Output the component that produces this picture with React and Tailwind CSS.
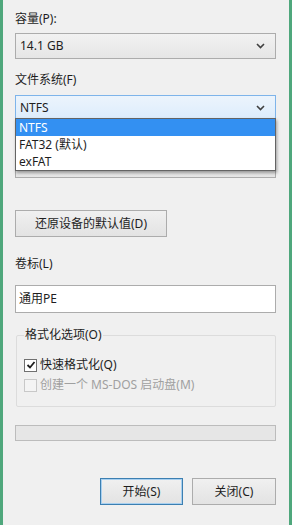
import React from "react";

const font = "font-['Segoe_UI','Noto_Sans','Noto_Sans_CJK_SC',sans-serif]";

const Chevron = () => (
    <svg width="9" height="6" viewBox="0 0 9 6" className="shrink-0">
        <path d="M1 1 L4.5 4.5 L8 1" fill="none" stroke="#404040" strokeWidth="1.6" />
    </svg>
);

const Combo = ({value, active = false, className = ""}) => (
    <div
        className={`flex items-center h-[26px] pl-[4px] pr-[10px] border text-[12px] text-[#1e1e1e] ${
            active
                ? "border-[#7eb4ea] bg-gradient-to-b from-[#ecf4fc] to-[#dcecfc]"
                : "border-[#acacac] bg-gradient-to-b from-[#f2f2f2] to-[#e6e6e6]"
        } ${className}`}
    >
        <span className="flex-1 leading-none">{value}</span>
        <Chevron />
    </div>
);

const Button = ({children, focused = false, className = ""}) => (
    <div
        className={`flex items-center justify-center h-[27px] border text-[12px] text-[#1e1e1e] bg-gradient-to-b from-[#f0f0f0] to-[#e3e3e3] ${
            focused ? "border-[#3c7fb1] shadow-[inset_0_0_0_1px_#a8d0f0]" : "border-[#acacac]"
        } ${className}`}
    >
        {children}
    </div>
);

const CheckBox = ({checked, disabled, label}) => (
    <div className={`flex items-center gap-[3px] text-[12px] leading-[16px] ${disabled ? "text-[#a0a0a0]" : "text-[#1e1e1e]"}`}>
        <span className={`flex items-center justify-center w-[13px] h-[13px] border ${disabled ? "border-[#c8c8c8] bg-[#f4f4f4]" : "border-[#707070] bg-white"}`}>
            {checked && (
                <svg width="10" height="10" viewBox="0 0 10 10">
                    <path d="M1.5 5 L4 7.5 L8.5 2" fill="none" stroke="#1e1e1e" strokeWidth="1.8" />
                </svg>
            )}
        </span>
        {label}
    </div>
);

const App = () => {
    return (
        <div className={`${font} w-[292px] h-[525px] bg-[#f0f0f0] border-l-[3px] border-r-[3px] border-[#4fa77c] overflow-hidden`}>
            <div className="pl-[12px] pr-[13px] pt-[11px] flex flex-col">
                <div className="h-[16px] text-[12px] leading-[16px] text-[#1e1e1e]">容量(P):</div>
                <Combo value="14.1 GB" className="mt-[6px]" />

                <div className="mt-[13px] h-[16px] text-[12px] leading-[16px] text-[#1e1e1e]">文件系统(F)</div>
                <div className="relative mt-[7px]">
                    <Combo value="NTFS" active />

                    {/* allocation unit row, covered by the open list */}
                    <div className="h-[16px] mt-[14px]" />
                    <Combo value="" className="mt-[1px]" />

                    <div className="absolute left-0 right-0 top-[23px] z-10 bg-white border border-[#646464] shadow-[1px_2px_3px_rgba(0,0,0,0.35)] text-[12px] leading-[17px] text-[#1e1e1e]">
                        <div className="pl-[3px] bg-[#3390f2] text-white">NTFS</div>
                        <div className="pl-[3px]">FAT32 (默认)</div>
                        <div className="pl-[3px]">exFAT</div>
                    </div>
                </div>

                <Button className="mt-[32px] w-[152px]">还原设备的默认值(D)</Button>

                <div className="mt-[19px] h-[16px] text-[12px] leading-[16px] text-[#1e1e1e]">卷标(L)</div>
                <div className="mt-[13px] h-[28px] border border-[#acacac] bg-white flex items-center pl-[3px] text-[12px] text-[#1e1e1e]">
                    通用PE
                </div>

                <fieldset className="mt-[14px] ml-[1px] border border-[#dcdcdc] rounded-[2px] px-[7px] pb-[13px] pt-[14px] flex flex-col gap-[4px]">
                    <legend className="px-[1px] text-[12px] leading-[16px] text-[#1e1e1e]">格式化选项(O)</legend>
                    <CheckBox checked label="快速格式化(Q)" />
                    <CheckBox disabled label="创建一个 MS-DOS 启动盘(M)" />
                </fieldset>

                <div className="mt-[18px] h-[16px] border border-[#bcbcbc] bg-[#e6e6e6]" />

                <div className="mt-[37px] flex justify-end gap-[9px]">
                    <Button focused className="w-[83px]">开始(S)</Button>
                    <Button className="w-[84px]">关闭(C)</Button>
                </div>
            </div>
        </div>
    );
};

export default App;
